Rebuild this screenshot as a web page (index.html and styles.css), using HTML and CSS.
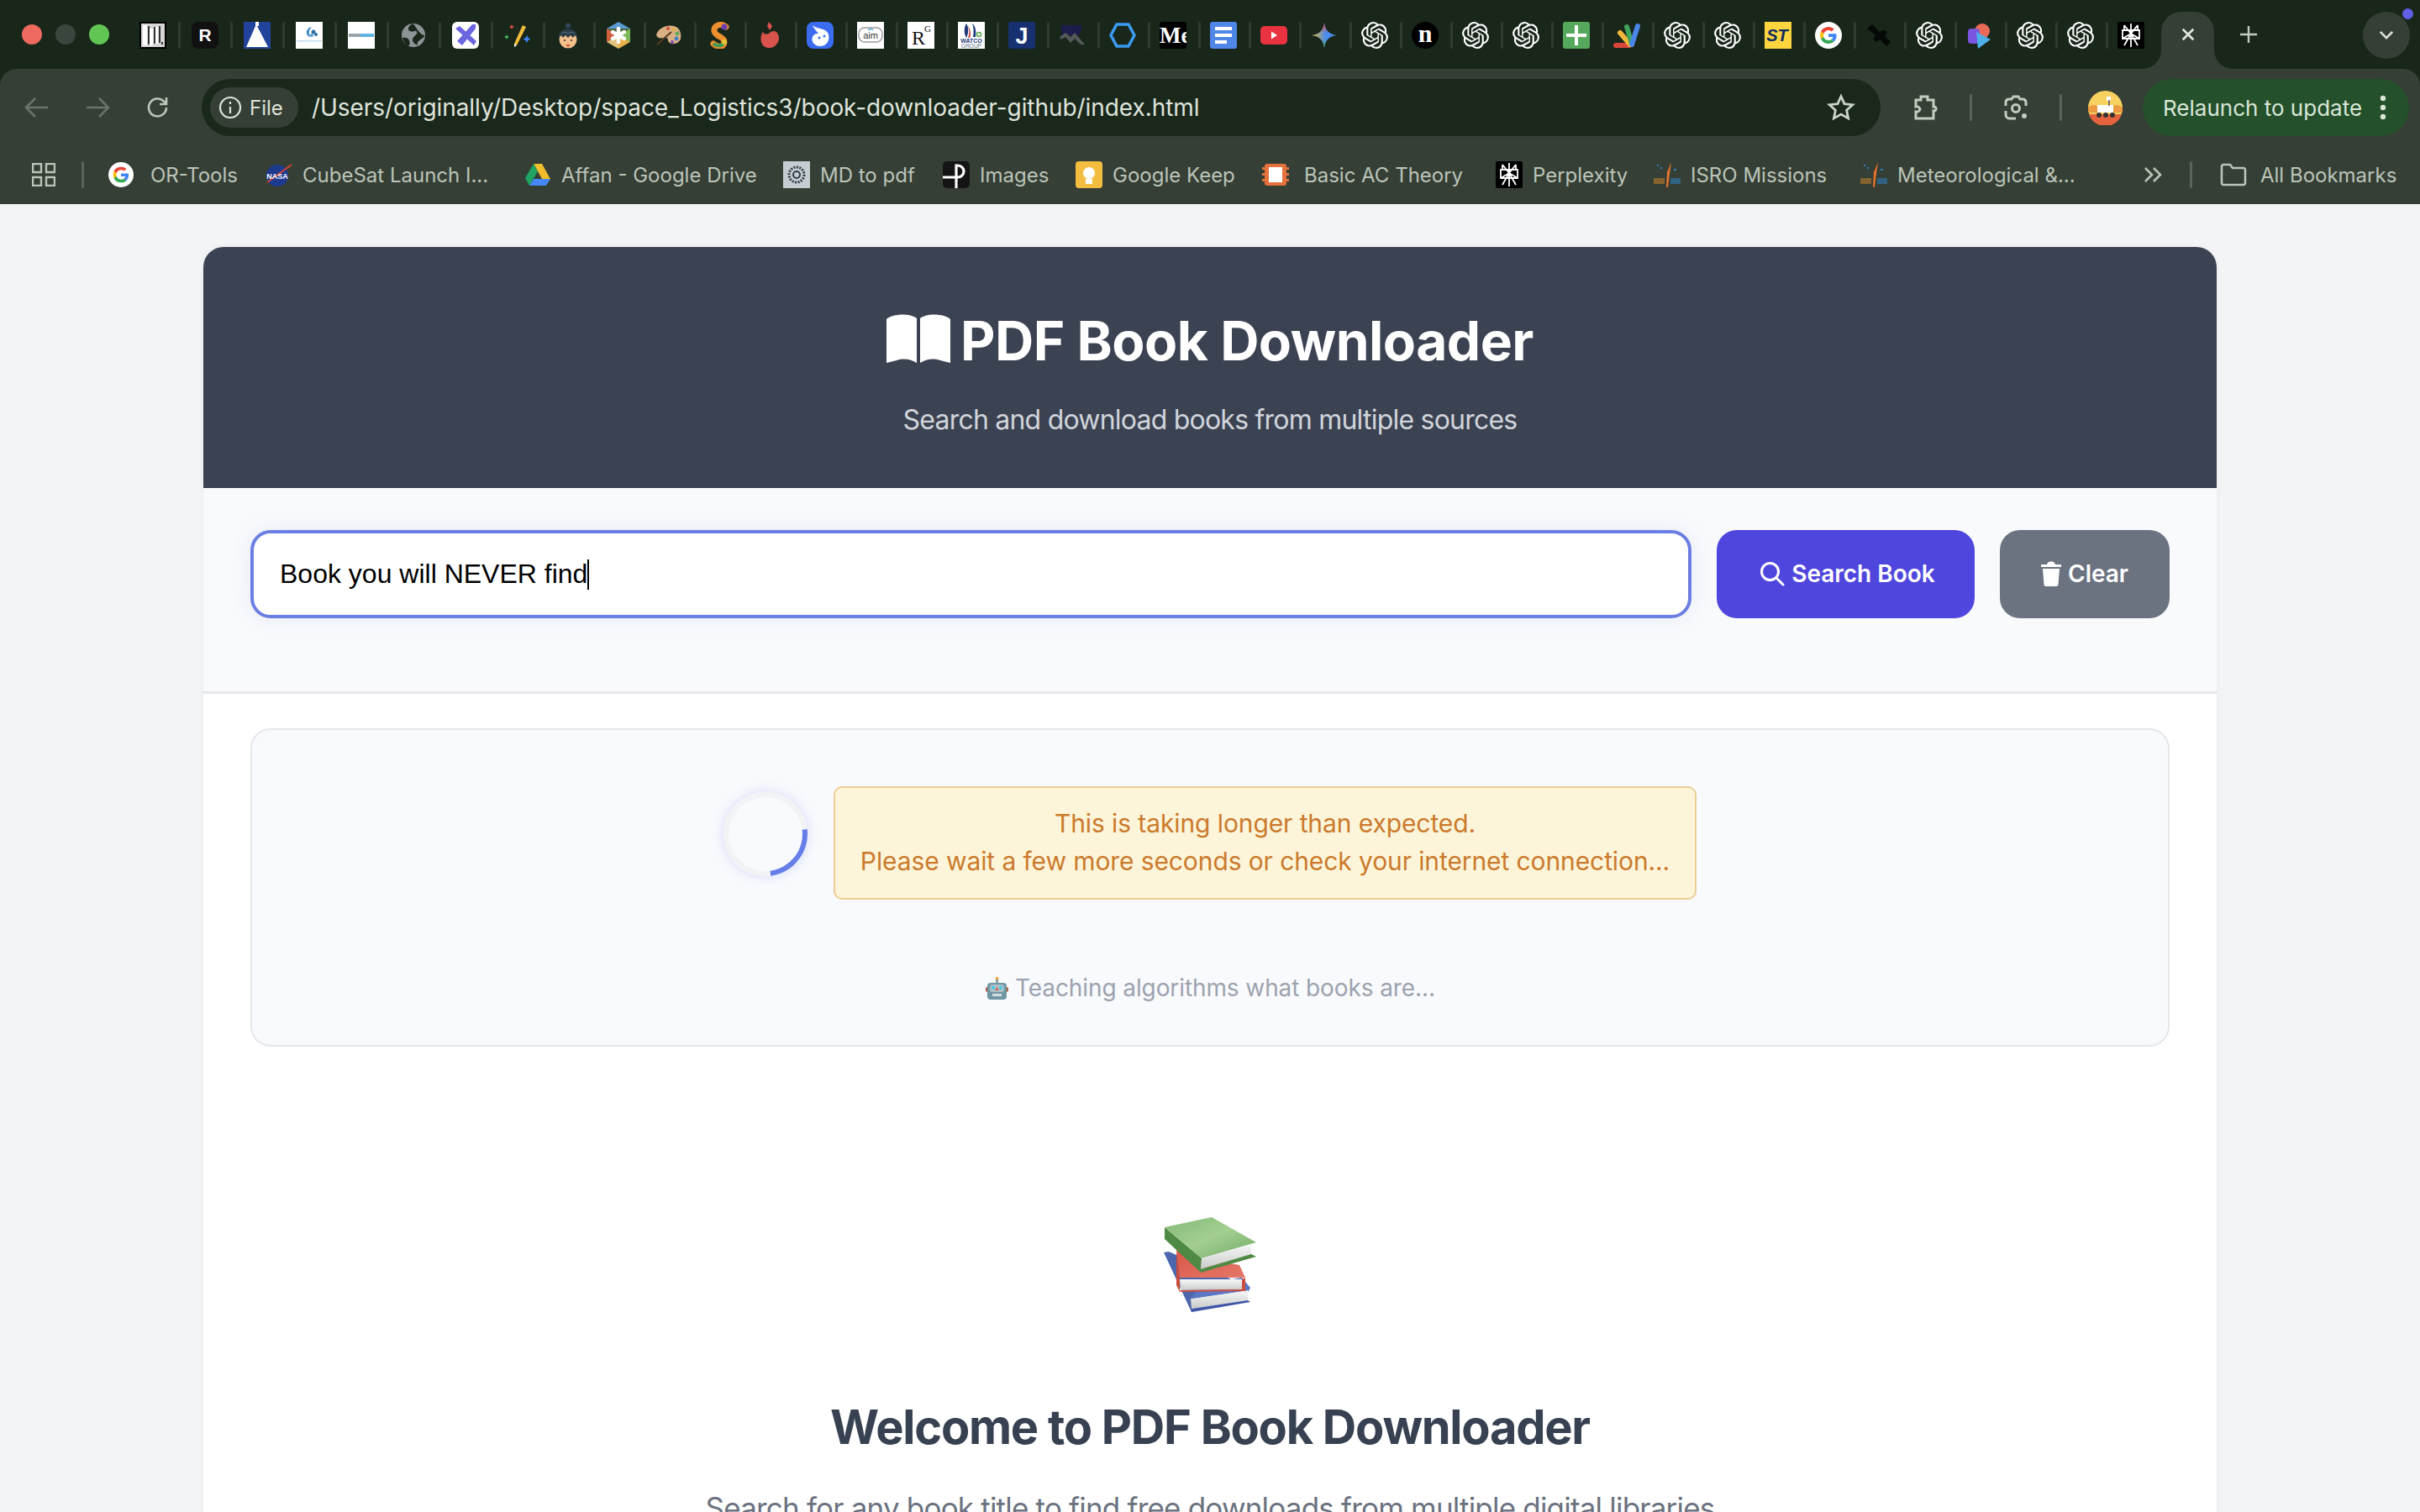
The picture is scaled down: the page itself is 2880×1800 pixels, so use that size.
FILE: index.html
```html
<!DOCTYPE html>
<html lang="en">
<head>
<meta charset="utf-8">
<title>PDF Book Downloader</title>
<link rel="stylesheet" href="styles.css">
</head>
<body>
<svg class="sprite" aria-hidden="true">
  <defs>
    <linearGradient id="gem" x1="0" y1="0" x2="1" y2="0"><stop offset="0" stop-color="#f5b82a"/><stop offset=".55" stop-color="#f5b82a" stop-opacity="0"/></linearGradient>
    <linearGradient id="gem2" x1="0" y1="0" x2="0" y2="1"><stop offset="0" stop-color="#e0483c"/><stop offset=".42" stop-color="#e0483c" stop-opacity="0"/><stop offset=".62" stop-color="#3fae5f" stop-opacity="0"/><stop offset="1" stop-color="#3fae5f"/></linearGradient>
    <linearGradient id="gcover" x1="0" y1="0" x2="1" y2="1"><stop offset="0" stop-color="#84b978"/><stop offset=".5" stop-color="#a3cf90"/><stop offset="1" stop-color="#6fa865"/></linearGradient>
    <linearGradient id="rcover" x1="0" y1="0" x2="1" y2="1"><stop offset="0" stop-color="#d95747"/><stop offset="1" stop-color="#e5786a"/></linearGradient>
    <linearGradient id="pages" x1="0" y1="0" x2="0" y2="1"><stop offset="0" stop-color="#f7f7f7"/><stop offset="1" stop-color="#c9cbcb"/></linearGradient>
    <symbol id="gpt" viewBox="0 0 24 24"><path fill="#fff" d="M22.2819 9.8211a5.9847 5.9847 0 0 0-.5157-4.9108 6.0462 6.0462 0 0 0-6.5098-2.9A6.0651 6.0651 0 0 0 4.9807 4.1818a5.9847 5.9847 0 0 0-3.9977 2.9 6.0462 6.0462 0 0 0 .7427 7.0966 5.98 5.98 0 0 0 .511 4.9107 6.051 6.051 0 0 0 6.5146 2.9001A5.9847 5.9847 0 0 0 13.2599 24a6.0557 6.0557 0 0 0 5.7718-4.2058 5.9894 5.9894 0 0 0 3.9977-2.9001 6.0557 6.0557 0 0 0-.7475-7.0729zm-9.022 12.6081a4.4755 4.4755 0 0 1-2.8764-1.0408l.1419-.0804 4.7783-2.7582a.7948.7948 0 0 0 .3927-.6813v-6.7369l2.02 1.1686a.071.071 0 0 1 .038.052v5.5826a4.504 4.504 0 0 1-4.4945 4.4944zm-9.6607-4.1254a4.4708 4.4708 0 0 1-.5346-3.0137l.142.0852 4.783 2.7582a.7712.7712 0 0 0 .7806 0l5.8428-3.3685v2.3324a.0804.0804 0 0 1-.0332.0615L9.74 19.9502a4.4992 4.4992 0 0 1-6.1408-1.6464zM2.3408 7.8956a4.485 4.485 0 0 1 2.3655-1.9728V11.6a.7664.7664 0 0 0 .3879.6765l5.8144 3.3543-2.0201 1.1685a.0757.0757 0 0 1-.071 0l-4.8303-2.7865A4.504 4.504 0 0 1 2.3408 7.872zm16.5963 3.8558L13.1038 8.364 15.1192 7.2a.0757.0757 0 0 1 .071 0l4.8303 2.7913a4.4944 4.4944 0 0 1-.6765 8.1042v-5.6772a.79.79 0 0 0-.407-.667zm2.0107-3.0231l-.142-.0852-4.7735-2.7818a.7759.7759 0 0 0-.7854 0L9.409 9.2297V6.8974a.0662.0662 0 0 1 .0284-.0615l4.8303-2.7866a4.4992 4.4992 0 0 1 6.6802 4.66zM8.3065 12.863l-2.02-1.1638a.0804.0804 0 0 1-.038-.0567V6.0742a4.4992 4.4992 0 0 1 7.3757-3.4537l-.142.0805L8.704 5.459a.7948.7948 0 0 0-.3927.6813zm1.0976-2.3654l2.602-1.4998 2.6069 1.4998v2.9994l-2.5974 1.4997-2.6067-1.4997Z"/></symbol>
    <symbol id="goog" viewBox="0 0 48 48"><path fill="#EA4335" d="M24 9.5c3.54 0 6.71 1.22 9.21 3.6l6.85-6.85C35.9 2.38 30.47 0 24 0 14.62 0 6.51 5.38 2.56 13.22l7.98 6.19C12.43 13.72 17.74 9.5 24 9.5z"/><path fill="#4285F4" d="M46.98 24.55c0-1.57-.15-3.09-.38-4.55H24v9.02h12.94c-.58 2.96-2.26 5.48-4.78 7.18l7.73 6c4.51-4.18 7.09-10.36 7.09-17.65z"/><path fill="#FBBC05" d="M10.53 28.59c-.48-1.45-.76-2.99-.76-4.59s.27-3.14.76-4.59l-7.98-6.19C.92 16.46 0 20.12 0 24c0 3.88.92 7.54 2.56 10.78l7.97-6.19z"/><path fill="#34A853" d="M24 48c6.48 0 11.93-2.13 15.89-5.81l-7.73-6c-2.15 1.45-4.92 2.3-8.16 2.3-6.26 0-11.57-4.22-13.47-9.91l-7.98 6.19C6.51 42.62 14.62 48 24 48z"/></symbol>
    <symbol id="perp" viewBox="0 0 32 32"><rect width="32" height="32" rx="2" fill="#000"/><path fill="none" stroke="#fff" stroke-width="1.800" d="M16 2v28M8 4l8 10 8-10M6 10h20v10H6zM8 28l8-14 8 14M6 20l10-6 10 6M8 4v6M24 4v6"/></symbol>
    <symbol id="isro" viewBox="0 0 32 32"><path fill="#e9722b" d="M15 31l1-18 5-12-2 13-2 17z"/><path fill="#2f7fc2" d="M4 4h2v2H4zM8 7h2v2H8zM24 9h3v2h-3z"/><path fill="#c9822d" d="M0 20h13v7H0z" opacity=".55"/><path fill="#2f7fc2" d="M20 20h12v7H20z" opacity=".55"/></symbol>
  </defs>
</svg>

<header class="chrome">
  <div class="strip">
    <div class="lights"><span class="light red"></span><span class="light off"></span><span class="light green"></span></div>
    <div class="tabs">
      <div class="tab wide"><svg class="fav" viewBox="0 0 32 32"><rect width="32" height="32" fill="#000"/><rect x="2" y="2" width="28" height="28" fill="#d6d6d6"/><path fill="#fff" d="M4 4h5v24H4zM12 8h4v20h-4zM19 6h3v20h-3z"/><path fill="#333" d="M10 5h2v22h-2zM17 6h2v20h-2zM23 5h2v20h-2zM26 24h2v3h-2z"/></svg><i class="sep"></i></div>
      <div class="tab wide"><svg class="fav" viewBox="0 0 32 32"><rect width="32" height="32" rx="8" fill="#111"/><text x="16" y="23" class="svg-bold" font-size="21" fill="#fff" text-anchor="middle">R</text></svg><i class="sep"></i></div>
      <div class="tab wide"><svg class="fav" viewBox="0 0 32 32"><rect width="32" height="32" fill="#22439c"/><path fill="#fff" d="M14 0h4v5l-2 0 13 25H3L14 5z"/></svg><i class="sep"></i></div>
      <div class="tab wide"><svg class="fav" viewBox="0 0 32 32"><rect width="32" height="32" fill="#fff"/><path fill="#3d8ac9" d="M14 9c2-3 4-3 5-2-4 2-4 8-1 11-4 0-7-5-4-9z"/><circle cx="21" cy="12" r="2.500" fill="#2d6fa8"/><circle cx="24" cy="15" r="2" fill="#2d6fa8"/><circle cx="19" cy="16" r="2" fill="#5ba4d8"/><rect x="1" y="22" width="30" height="1.500" fill="#c3dbec"/></svg><i class="sep"></i></div>
      <div class="tab wide"><svg class="fav" viewBox="0 0 32 32"><rect width="32" height="32" fill="#fff"/><rect x="1" y="14" width="14" height="4" fill="#9aa4ac"/><rect x="15" y="14" width="16" height="4" fill="#5db2e2"/></svg><i class="sep"></i></div>
      <div class="tab wide"><svg class="fav" viewBox="0 0 32 32"><circle cx="16" cy="16" r="14" fill="#8e9396"/><path fill="#19261a" d="M15 2c-5 3-7 7-3 9s6-2 8 1-5 5-5 9 4 6 6 7c-2-7 9-8 8-12-3 0-5-3-7-5s-3-6-7-9zM3 19c3-1 7 0 8 3s1 5-1 7c-4-2-6-6-7-10z"/></svg><i class="sep"></i></div>
      <div class="tab wide"><svg class="fav" viewBox="0 0 32 32"><rect width="32" height="32" rx="6" fill="#fff"/><path fill="#6b66e0" d="M24 3l4 0 0 5-16 20-6-5zM4 8l5-3 20 18-3 5-11-10z"/></svg><i class="sep"></i></div>
      <div class="tab"><svg class="fav" viewBox="0 0 32 32"><path fill="#f3bf3a" d="M22 4l4 2-11 22-3-2z"/><path fill="#fff" d="M12 26l3 2-3 2z"/><path fill="#e04a45" d="M9 3l1 2 2 1-2 1-1 2-1-2-2-1 2-1z"/><path fill="#3fbb5a" d="M3 15l1 2 2 1-2 1-1 2-1-2-2-1 2-1z"/><path fill="#3f82f0" d="M27 16l1.500 3 3 1.500-3 1.500-1.500 3-1.500-3-3-1.500 3-1.500z"/></svg><i class="sep"></i></div>
      <div class="tab"><svg class="fav" viewBox="0 0 32 32"><circle cx="16" cy="21" r="10.500" fill="#f3c08c"/><path fill="#2b3c48" d="M5 19c-1-7 5-11 11-11s12 4 11 11l-3-3-2 3-3-3-3 3-3-3-3 3-2-3z"/><circle cx="16" cy="4.500" r="3" fill="#33485a"/><path fill="none" stroke="#5a6f80" stroke-width="1" d="M8 14l4-2 4 2 4-2 4 2"/><circle cx="12" cy="22" r="1" fill="#333"/><circle cx="20" cy="22" r="1" fill="#333"/><path fill="#c94a3a" d="M13 27h6l-3 3z"/></svg><i class="sep"></i></div>
      <div class="tab"><svg class="fav" viewBox="0 0 32 32"><path fill="#5b9bd5" d="M16 0l14 8H2z"/><path fill="#7dbb5a" d="M30 8v16l-14-8z"/><path fill="#e9b04d" d="M30 24l-14 8V16z"/><path fill="#ddc27a" d="M16 32L2 24l14-8z"/><path fill="#d2603f" d="M2 24V8l14 8z"/><path fill="#9ac267" d="M2 8h28L16 16z" opacity=".4"/><path stroke="#fff" stroke-width="4.500" stroke-linecap="round" d="M16 8v16M9 12l14 8M23 12L9 20"/></svg><i class="sep"></i></div>
      <div class="tab"><svg class="fav" viewBox="0 0 32 32"><path fill="#d9b184" d="M1 16C3 7 14 3 22 5s9 10 8 15-9 8-13 5 0-6-5-6-8 2-11-3z"/><circle cx="15" cy="8" r="2" fill="#d94a3a"/><circle cx="22" cy="9" r="2" fill="#e3b33c"/><circle cx="26" cy="14" r="2.400" fill="#62a85b"/><circle cx="25" cy="20" r="2.400" fill="#3f82c9"/><circle cx="20" cy="24" r="2" fill="#7d4fb5"/><path stroke="#5a3a20" stroke-width="2" d="M2 27L19 12"/></svg><i class="sep"></i></div>
      <div class="tab"><svg class="fav" viewBox="0 0 32 32"><path fill="none" stroke="#ec8f2c" stroke-width="7" stroke-linecap="round" d="M24 6c-6-5-15-2-14 5s12 6 12 13-9 6-13 2"/><path fill="none" stroke="#3a9a5b" stroke-width="4" d="M9 26c4 3 10 3 12 0"/><circle cx="22" cy="6" r="3.500" fill="#6a3fb0"/><circle cx="22" cy="24" r="3" fill="#e6c93a"/></svg><i class="sep"></i></div>
      <div class="tab"><svg class="fav" viewBox="0 0 32 32"><path fill="#d9534d" d="M15 0l4 5-3 5-3-5zM8 12c2 4 6 3 8 1s6-3 8-1c4 5 4 10 0 15s-11 5-15 2-5-12-1-17z"/></svg><i class="sep"></i></div>
      <div class="tab"><svg class="fav" viewBox="0 0 32 32"><rect width="32" height="32" rx="8" fill="#3b6cf0"/><path fill="#fff" d="M7 4c5 5 17 3 19 11s-3 14-10 14-11-6-9-11 7-4 7-4c-3-4-6-7-7-10z"/><circle cx="15" cy="19" r="1.500" fill="#3b6cf0"/><circle cx="21" cy="17" r="1.500" fill="#3b6cf0"/></svg><i class="sep"></i></div>
      <div class="tab"><svg class="fav" viewBox="0 0 32 32"><rect width="32" height="32" fill="#fff"/><rect x="2" y="7" width="28" height="17" rx="7" fill="#fff" stroke="#999" stroke-width="1.400"/><text x="16" y="20" class="svg-sans" font-size="11" fill="#333" text-anchor="middle">aim</text><path stroke="#4ab0d9" stroke-width="1.500" fill="none" d="M13 10c2-2 5-2 6 0"/></svg><i class="sep"></i></div>
      <div class="tab"><svg class="fav" viewBox="0 0 32 32"><rect width="32" height="32" fill="#fff"/><text x="5" y="27" class="svg-serif" font-size="24" fill="#111">R</text><text x="20" y="12" class="svg-serif" font-size="11" fill="#111">G</text></svg><i class="sep"></i></div>
      <div class="tab"><svg class="fav" viewBox="0 0 32 32"><rect width="32" height="32" fill="#fff"/><path fill="#1e3a7a" d="M10 2c3 4 3 11 0 17-3-5-3-12 0-17zM17 2c4 3 5 9 4 16h-3c1-6 1-11-1-16z"/><path fill="#c93a34" d="M12 5c3 4 4 9 2 14h-2c2-5 2-9 0-14z"/><circle cx="25" cy="15" r="2.500" fill="none" stroke="#5aa845" stroke-width="1.500"/><text x="16" y="25" class="svg-bold" font-size="7" fill="#1e3a7a" text-anchor="middle">WATCO</text><text x="16" y="31" class="svg-sans" font-size="6.500" fill="#5f6c86" text-anchor="middle">GROUP</text></svg><i class="sep"></i></div>
      <div class="tab"><svg class="fav" viewBox="0 0 32 32"><rect width="32" height="32" rx="3" fill="#17306f"/><text x="16" y="26" class="svg-bold" font-size="27" fill="#fff" text-anchor="middle">J</text></svg><i class="sep"></i></div>
      <div class="tab"><svg class="fav" viewBox="0 0 32 32"><path fill="#1d1c4a" d="M2 4h26l-4 12H4z"/><path fill="#55595a" d="M1 18l7-5 6 5 5-5 12 14h-5l-7-7-5 5-6-7-5 3z"/></svg><i class="sep"></i></div>
      <div class="tab"><svg class="fav" viewBox="0 0 32 32"><path fill="none" stroke="#3a9bef" stroke-width="3.600" d="M9 3h14l7 13-7 13H9L2 16z"/></svg><i class="sep"></i></div>
      <div class="tab"><svg class="fav" viewBox="0 0 32 32"><rect width="32" height="32" rx="3" fill="#000"/><text x="0" y="25" class="svg-serif-b" font-size="27" fill="#fff">Me</text></svg><i class="sep"></i></div>
      <div class="tab"><svg class="fav" viewBox="0 0 32 32"><rect width="32" height="32" rx="3" fill="#4f87e8"/><path fill="#fff" d="M6 6h20v4H6zM6 14h20v4H6zM6 22h14v4H6z"/></svg><i class="sep"></i></div>
      <div class="tab"><svg class="fav" viewBox="0 0 32 32"><rect y="5" width="32" height="22" rx="5" fill="#ea3340"/><path fill="#fff" d="M13 11.500l7 4.500-7 4.500z"/></svg><i class="sep"></i></div>
      <div class="tab"><svg class="fav" viewBox="0 0 32 32"><path fill="#4a8cf0" d="M16 1c1 9 6 14 15 15-9 1-14 6-15 15-1-9-6-14-15-15 9-1 14-6 15-15z"/><path fill="url(#gem)" d="M16 1c1 9 6 14 15 15-9 1-14 6-15 15-1-9-6-14-15-15 9-1 14-6 15-15z"/><path fill="url(#gem2)" d="M16 1c1 9 6 14 15 15-9 1-14 6-15 15-1-9-6-14-15-15 9-1 14-6 15-15z"/></svg><i class="sep"></i></div>
      <div class="tab"><svg class="fav"><use href="#gpt"/></svg><i class="sep"></i></div>
      <div class="tab"><svg class="fav" viewBox="0 0 32 32"><circle cx="16" cy="16" r="16" fill="#000"/><text x="16" y="24" class="svg-serif-b" font-size="30" fill="#fff" text-anchor="middle">n</text></svg><i class="sep"></i></div>
      <div class="tab"><svg class="fav"><use href="#gpt"/></svg><i class="sep"></i></div>
      <div class="tab"><svg class="fav"><use href="#gpt"/></svg><i class="sep"></i></div>
      <div class="tab"><svg class="fav" viewBox="0 0 32 32"><rect width="32" height="32" rx="3" fill="#56a85c"/><path fill="#fff" d="M14 4h4v10h10v4H18v10h-4V18H4v-4h10z"/></svg><i class="sep"></i></div>
      <div class="tab"><svg class="fav" viewBox="0 0 32 32"><path stroke="#d9453a" stroke-width="6" stroke-linecap="round" d="M3 28h16"/><path stroke="#f0b73c" stroke-width="6" stroke-linecap="round" d="M8 13l12 14"/><path stroke="#3fa35a" stroke-width="6" stroke-linecap="round" d="M16 6l6 20"/><path stroke="#4a86e8" stroke-width="6" stroke-linecap="round" d="M29 5l-7 22"/></svg><i class="sep"></i></div>
      <div class="tab"><svg class="fav"><use href="#gpt"/></svg><i class="sep"></i></div>
      <div class="tab"><svg class="fav"><use href="#gpt"/></svg><i class="sep"></i></div>
      <div class="tab"><svg class="fav" viewBox="0 0 32 32"><rect width="32" height="32" fill="#fdd53f"/><text x="15" y="23" class="svg-bold-i" font-size="20" fill="#0b2a5e" text-anchor="middle">ST</text></svg><i class="sep"></i></div>
      <div class="tab"><svg class="fav" viewBox="0 0 32 32"><circle cx="16" cy="16" r="16" fill="#fff"/><use href="#goog" x="6" y="6" width="20" height="20"/></svg><i class="sep"></i></div>
      <div class="tab"><svg class="fav" viewBox="0 0 32 32"><path fill="#060a06" d="M2 8l6-5 9 9 5-3 4 4-3 4 7 7-5 5-8-8-4 3-4-4 3-4z"/></svg><i class="sep"></i></div>
      <div class="tab"><svg class="fav"><use href="#gpt"/></svg><i class="sep"></i></div>
      <div class="tab"><svg class="fav" viewBox="0 0 32 32"><circle cx="19" cy="11" r="9" fill="#ea6a58"/><rect x="2" y="8" width="14" height="18" rx="4" fill="#7a55e0"/><path fill="#4db0e8" d="M12 12l17 9-15 11z"/></svg><i class="sep"></i></div>
      <div class="tab"><svg class="fav"><use href="#gpt"/></svg><i class="sep"></i></div>
      <div class="tab"><svg class="fav"><use href="#gpt"/></svg><i class="sep"></i></div>
      <div class="tab last"><svg class="fav"><use href="#perp"/></svg></div>
    </div>
    <div class="active-tab"><svg class="ico-x" viewBox="0 0 20 20"><path d="M3 3l14 14M17 3L3 17"/></svg></div>
    <svg class="ico-plus" viewBox="0 0 24 24"><path d="M12 1v22M1 12h22"/></svg>
    <div class="tab-search"><svg class="ico-chev" viewBox="0 0 20 12"><path d="M2 2l8 8 8-8"/></svg><span class="tab-dot"></span></div>
  </div>

  <div class="toolbar">
    <nav class="nav">
      <svg class="nav-ico dim" viewBox="0 0 32 32"><path d="M29 16H4M14 5L3 16l11 11"/></svg>
      <svg class="nav-ico dim" viewBox="0 0 32 32"><path d="M3 16h25M18 5l11 11-11 11"/></svg>
      <svg class="nav-ico" viewBox="0 0 32 32"><path d="M26 16a10.500 10.500 0 1 1-3-7.400L26 12M26 4v8h-8"/></svg>
    </nav>
    <div class="omni">
      <div class="chip"><svg class="info" viewBox="0 0 28 28"><circle cx="14" cy="14" r="12"/><path d="M14 13v8M14 7v3"/></svg><span>File</span></div>
      <span class="url">/Users/originally/Desktop/space_Logistics3/book-downloader-github/index.html</span>
      <svg class="star" viewBox="0 0 32 32"><path d="M16 3.500l3.800 8.400 9.200 1-6.800 6.200 1.900 9-8.100-4.600-8.100 4.600 1.900-9L3 12.900l9.200-1z"/></svg>
    </div>
    <div class="tb-right">
      <svg class="ext" viewBox="0 0 34 32"><path d="M4 7h6V3h8v4h7v8c4-1 4 6 0 5v9H4v-8c4 1 5-3 5-3s-1-4-5-3z"/></svg>
      <i class="tb-sep"></i>
      <svg class="lens" viewBox="0 0 36 36"><path d="M6 16v-4c0-3 2-4 4-4h3l2-3h6l2 3h3c2 0 4 1 4 4v4M6 22v4c0 3 2 5 4 5h8"/><circle cx="18" cy="19" r="4.500"/><circle class="lens-dot" cx="28" cy="28" r="3"/></svg>
      <i class="tb-sep"></i>
      <svg class="avatar" viewBox="0 0 41 41"><circle cx="20.500" cy="20.500" r="20.500" fill="#f7d260"/><path fill="#eb9b40" d="M0 20c6-5 10-3 14 1l13-1c4-4 9-4 14 0v6H0z"/><path fill="#e4633c" d="M1 28h39a20.500 20.500 0 0 1-39 0z"/><rect x="11" y="17" width="19" height="9" rx="1" fill="#fff"/><rect x="22" y="7" width="5" height="5" fill="#fff"/><rect x="24" y="11" width="2" height="7" fill="#777"/><circle cx="13" cy="29" r="3" fill="#333"/><circle cx="21" cy="29" r="3" fill="#333"/><circle cx="29" cy="29" r="3" fill="#333"/></svg>
      <div class="relaunch"><span>Relaunch to update</span><svg class="kebab" viewBox="0 0 8 30"><circle cx="4" cy="4" r="3.200"/><circle cx="4" cy="15" r="3.200"/><circle cx="4" cy="26" r="3.200"/></svg></div>
    </div>
  </div>

  <div class="bookmarks">
    <svg class="apps" viewBox="0 0 28 28"><path d="M1 1h10v10H1zM17 1h10v10H17zM1 17h10v10H1zM17 17h10v10H17z"/></svg>
    <i class="bm-sep first"></i>
    <div class="bm b1"><svg class="bm-ico" viewBox="0 0 32 32"><circle cx="16" cy="16" r="15" fill="#fff"/><use href="#goog" x="6.500" y="6.500" width="19" height="19"/></svg><span>OR-Tools</span></div>
    <div class="bm b2"><svg class="bm-ico" viewBox="0 0 32 32"><circle cx="14" cy="17" r="13" fill="#1d3a8f"/><path stroke="#e0402e" stroke-width="1.600" d="M2 25L31 4"/><text x="14" y="21" class="svg-bold" font-size="9" fill="#fff" text-anchor="middle">NASA</text></svg><span>CubeSat Launch I...</span></div>
    <div class="bm b3"><svg class="bm-ico" viewBox="0 0 32 32"><path fill="#f2bd2c" d="M11 3h10l10 18H21z"/><path fill="#1fa463" d="M11 3l5 9-10 17-5-9z"/><path fill="#4587f4" d="M11 21h20l-5 8H6z"/></svg><span>Affan - Google Drive</span></div>
    <div class="bm b4"><svg class="bm-ico" viewBox="0 0 32 32"><rect width="32" height="32" fill="#c6cdd2"/><circle cx="16" cy="16" r="9" fill="none" stroke="#2c3a44" stroke-width="3" stroke-dasharray="2 1.500"/><circle cx="16" cy="16" r="4" fill="none" stroke="#2c3a44" stroke-width="2"/></svg><span>MD to pdf</span></div>
    <div class="bm b5"><svg class="bm-ico" viewBox="0 0 32 32"><rect width="32" height="32" rx="5" fill="#141414"/><path fill="none" stroke="#fff" stroke-width="3.200" d="M16 32V5h2a7 7 0 0 1 0 14H0"/></svg><span>Images</span></div>
    <div class="bm b6"><svg class="bm-ico" viewBox="0 0 32 32"><rect width="32" height="32" rx="4" fill="#f3bd3f"/><circle cx="16" cy="14" r="7" fill="#fff"/><rect x="12" y="21" width="8" height="6" fill="#fff"/></svg><span>Google Keep</span></div>
    <div class="bm b7"><svg class="bm-ico" viewBox="0 0 32 32"><rect x="3" y="3" width="26" height="26" rx="3" fill="#e5713c"/><path fill="#e5713c" d="M0 7h32v3H0zM0 14h32v3H0zM0 21h32v3H0z"/><rect x="8" y="7" width="16" height="18" fill="#fff"/></svg><span>Basic AC Theory</span></div>
    <div class="bm b8"><svg class="bm-ico"><use href="#perp"/></svg><span>Perplexity</span></div>
    <div class="bm b9"><svg class="bm-ico"><use href="#isro"/></svg><span>ISRO Missions</span></div>
    <div class="bm b10"><svg class="bm-ico"><use href="#isro"/></svg><span>Meteorological &amp;...</span></div>
    <svg class="more" viewBox="0 0 22 20"><path d="M2 2l8 8-8 8M12 2l8 8-8 8"/></svg>
    <i class="bm-sep second"></i>
    <svg class="folder" viewBox="0 0 32 28"><path d="M2 24V4c0-1 1-2 2-2h8l3 4h13c1 0 2 1 2 2v16c0 1-1 2-2 2H4c-1 0-2-1-2-2z"/></svg>
    <span class="all">All Bookmarks</span>
  </div>
</header>

<main class="page">
  <div class="container">
    <section class="hero">
      <h1 class="hero-title">
        <svg class="book-ico" viewBox="0 0 76 58"><path d="M0 6C6 0 27-2 36 5v53c-6-4-15-6-24-3-4 1-8 2-12 3zM40 5c9-7 30-5 36 1v52c-4-1-8-2-12-3-9-3-18-1-24 3z"/></svg>
        <span>PDF Book Downloader</span>
      </h1>
      <p class="hero-sub">Search and download books from multiple sources</p>
    </section>

    <section class="search">
      <div class="field"><span>Book you will NEVER find</span><i class="caret"></i></div>
      <button class="btn primary"><svg class="btn-ico" viewBox="0 0 30 30"><circle cx="12.500" cy="12.500" r="10"/><path d="M20 20l8 8"/></svg><span>Search Book</span></button>
      <button class="btn muted"><svg class="trash" viewBox="0 0 24 30"><path d="M0 4h7l1-2c1-2 7-2 8 0l1 2h7v3H0zM2 9h20l-1.500 19c0 1-1 2-2 2h-13c-1 0-2-1-2-2z"/></svg><span>Clear</span></button>
    </section>

    <section class="loading">
      <div class="loading-row">
        <div class="spinner"></div>
        <div class="notice">
          <p>This is taking longer than expected.</p>
          <p>Please wait a few more seconds or check your internet connection...</p>
        </div>
      </div>
      <p class="status"><svg class="robot" viewBox="0 0 29 28"><circle cx="14.500" cy="3" r="2" fill="#f0a63c"/><rect x="13" y="4" width="3" height="4" fill="#8fa3aa"/><rect x="1" y="13" width="27" height="6" rx="2" fill="#b5603f"/><rect x="3" y="8" width="23" height="20" rx="4" fill="#6f97a4"/><rect x="6" y="10" width="17" height="9" rx="3" fill="#aebfc6"/><circle cx="10" cy="14" r="2" fill="#3fd0e8"/><circle cx="19" cy="14" r="2" fill="#3fd0e8"/><path fill="#d9584a" d="M14.500 13l2 4h-4z"/><rect x="9" y="21" width="11" height="3" fill="#d7dde0"/></svg><span>Teaching algorithms what books are...</span></p>
    </section>

    <section class="welcome">
      <svg class="books" viewBox="0 0 110 114">
        <path fill="#4d67ad" d="M0 42l6-1 97 43-3 5-67 9v15z"/>
        <path fill="url(#pages)" d="M32 97l68-10v12l-67 10z"/>
        <path fill="#3f56a6" d="M33 113l70-12-3-2-67 10z"/>
        <path fill="#5b76c4" d="M45 80l48-8 10 12-3 3-68 10z"/>
        <path fill="#c94c3c" d="M15 39l4 33v17l-4-8z"/>
        <path fill="url(#rcover)" d="M15 39l30 10 45 8 7 15H19z"/>
        <path fill="url(#pages)" d="M19 74l74 0v12l-73 1z"/>
        <path fill="#cc4f40" d="M19 89l78-1 0-16-4 2v12l-73 1z"/>
        <path fill="#4f8a45" d="M1 12l44 37-1 17L1 26z"/>
        <path fill="url(#gcover)" d="M1 12L57 0l53 30-65 19z"/>
        <path fill="url(#pages)" d="M45 49l59-17v12l-60 18z"/>
        <path fill="#4f8a45" d="M44 66l66-19-6-3-60 18z"/>
      </svg>
      <h2 class="welcome-title">Welcome to PDF Book Downloader</h2>
      <p class="welcome-sub">Search for any book title to find free downloads from multiple digital libraries</p>
    </section>
  </div>
</main>
</body>
</html>
```

FILE: styles.css
```css
* { box-sizing: border-box; }
html, body { margin: 0; height: 100%; overflow: hidden; }
body { background: #f3f4f6; font-family: Inter, "Liberation Sans", sans-serif; }
p, h1, h2 { margin: 0; }
i { display: block; }
.sprite { position: absolute; width: 0; height: 0; }
.svg-bold { font-family: "Liberation Sans", sans-serif; font-weight: 700; }
.svg-bold-i { font-family: "Liberation Sans", sans-serif; font-weight: 700; font-style: italic; }
.svg-sans { font-family: "Liberation Sans", sans-serif; }
.svg-serif { font-family: "Liberation Serif", serif; }
.svg-serif-b { font-family: "Liberation Serif", serif; font-weight: 700; }

/* browser chrome */
.chrome { background: #19261a; }
.strip { height: 82px; display: flex; align-items: flex-start; padding-left: 26px; }
.lights { display: flex; gap: 16px; margin: 29px 36px 0 0; }
.light { width: 24px; height: 24px; border-radius: 50%; }
.red { background: #ee6a5f; }
.off { background: #3a463d; }
.green { background: #61c554; }
.tabs { display: flex; padding-top: 26px; }
.tab { width: 60px; height: 32px; display: flex; gap: 14px; flex: none; }
.tab.wide { width: 62px; }
.tab.last { width: 32px; margin-right: 20px; }
.fav { width: 32px; height: 32px; flex: none; display: block; }
.sep { width: 3px; height: 32px; background: #2f3b30; border-radius: 2px; flex: none; }
.active-tab { position: relative; width: 63px; height: 68px; margin-top: 14px; background: #353f35; border-radius: 24px 24px 0 0; display: flex; justify-content: center; padding-top: 18px; flex: none; }
.active-tab::before, .active-tab::after { content: ""; position: absolute; bottom: 0; width: 22px; height: 22px; }
.active-tab::before { left: -22px; background: radial-gradient(circle at 0 0, transparent 21.500px, #353f35 22px); }
.active-tab::after { right: -22px; background: radial-gradient(circle at 100% 0, transparent 21.500px, #353f35 22px); }
.ico-x { width: 18px; height: 18px; fill: none; stroke: #e2e7df; stroke-width: 3; }
.ico-plus { width: 22px; height: 22px; margin: 30px 0 0 30px; fill: none; stroke: #c3cbc0; stroke-width: 2.600; flex: none; }
.tab-search { position: relative; width: 56px; height: 56px; margin: 14px 12px 0 auto; background: #353f35; border-radius: 28px; display: flex; align-items: center; justify-content: center; flex: none; }
.ico-chev { width: 18px; height: 11px; fill: none; stroke: #dfe4dc; stroke-width: 2.800; margin-top: -2px; }
.tab-dot { position: absolute; top: -4px; right: -4px; width: 13px; height: 13px; border-radius: 50%; background: #5f5fe6; }

.toolbar { height: 80px; padding-top: 12px; background: #353f35; border-radius: 20px 20px 0 0; display: flex; align-items: flex-start; }
.nav { width: 240px; height: 68px; padding-left: 28px; display: flex; gap: 40px; align-items: center; flex: none; }
.nav-ico { width: 32px; height: 32px; fill: none; stroke: #bcc5ba; stroke-width: 2.600; flex: none; }
.nav-ico.dim { stroke: #68746a; }
.omni { flex: 1; min-width: 0; height: 68px; background: #1a271b; border-radius: 34px; padding: 0 30px 0 10px; display: flex; align-items: center; }
.chip { width: 105px; height: 48px; border-radius: 24px; background: #353f35; display: flex; align-items: center; gap: 9px; padding-left: 10px; color: #dfe4dc; font-size: 24px; flex: none; }
.info { width: 28px; height: 28px; fill: none; stroke: #dfe4dc; stroke-width: 2.200; flex: none; }
.url { margin-left: 16px; color: #dfe4dc; font-size: 28px; letter-spacing: -.06px; white-space: nowrap; flex: 1; }
.star { width: 34px; height: 34px; fill: none; stroke: #cdd4ca; stroke-width: 2.600; flex: none; }
.tb-right { display: flex; align-items: center; gap: 34px; height: 68px; margin-left: 38px; padding-right: 13px; flex: none; }
.ext { width: 34px; height: 32px; fill: none; stroke: #c2cdc0; stroke-width: 3; flex: none; }
.tb-sep { width: 3px; height: 32px; background: #59655a; border-radius: 2px; flex: none; }
.lens { width: 36px; height: 36px; fill: none; stroke: #c2cdc0; stroke-width: 3; flex: none; }
.lens-dot { fill: #c2cdc0; stroke: none; }
.avatar { width: 41px; height: 41px; margin: 0 2px 0 -3px; flex: none; }
.relaunch { width: 317px; height: 68px; margin-left: -12px; background: #24502b; border-radius: 34px; display: flex; align-items: center; justify-content: space-between; padding: 0 27px 0 24px; color: #d9e6d8; font-size: 26px; white-space: nowrap; flex: none; }
.kebab { width: 8px; height: 30px; fill: #d9e6d8; flex: none; }

.bookmarks { height: 81px; padding: 11px 0 0 38px; background: #353f35; display: flex; align-items: center; color: #bcc4b9; font-size: 24px; white-space: nowrap; }
.apps { width: 28px; height: 28px; fill: none; stroke: #bcc4b9; stroke-width: 2.400; flex: none; }
.bm-sep { width: 3px; height: 32px; background: #59655a; border-radius: 2px; flex: none; }
.bm-sep.first { margin: 0 28px 0 31px; }
.bm-sep.second { margin: 0 33px 0 33px; }
.bm { display: flex; align-items: center; gap: 12px; flex: none; }
.bm-ico { width: 32px; height: 32px; flex: none; }
.b1 { width: 188px; } .b1 .bm-ico { margin-right: 7px; }
.b2 { width: 308px; }
.b3 { width: 308px; }
.b4 { width: 190px; }
.b5 { width: 158px; }
.b6 { width: 222px; }
.b7 { width: 278px; } .b7 .bm-ico { margin-right: 6px; }
.b8 { width: 188px; }
.b9 { width: 246px; }
.b10 { width: 337px; }
.more { width: 22px; height: 20px; fill: none; stroke: #bcc4b9; stroke-width: 2.600; flex: none; }
.folder { width: 32px; height: 28px; fill: none; stroke: #bcc4b9; stroke-width: 2.600; flex: none; }
.all { margin-left: 16px; }

/* page */
.page { padding-top: 51px; }
.container { width: 2396px; margin: 0 auto; background: #fff; border-radius: 24px 24px 0 0; overflow: hidden; box-shadow: 0 0 6px rgba(60, 70, 100, .06); }
.hero { height: 287px; padding-top: 70px; background: #3b4252; text-align: center; }
.hero-title { display: flex; justify-content: center; align-items: center; gap: 12px; color: #fff; font-size: 64px; font-weight: 700; line-height: 84px; letter-spacing: -.5px; }
.book-ico { width: 76px; height: 58px; fill: #fff; flex: none; margin-top: -6px; }
.hero-sub { margin-top: 32px; color: #d1d5db; font-size: 32px; line-height: 40px; letter-spacing: -.78px; }

.search { height: 245px; padding: 50px 56px 0; background: #f9fafc; border-bottom: 3px solid #e7e8ee; display: flex; align-items: flex-start; gap: 30px; }
.field { flex: 1; height: 105px; background: #fff; border: 4px solid #6b7fe3; border-radius: 24px; padding-left: 31px; display: flex; align-items: center; font-family: "Liberation Sans", Arial, sans-serif; font-size: 32px; color: #000; box-shadow: 0 0 24px rgba(102, 126, 234, .12); }
.caret { width: 2px; height: 36px; background: #000; }
.btn { height: 105px; padding-bottom: 2px; border: 0; border-radius: 24px; color: #fff; font: 600 28px Inter, "Liberation Sans", sans-serif; display: flex; align-items: center; justify-content: center; gap: 8px; flex: none; }
.primary { width: 307px; background: #4f46dd; padding-right: 2px; }
.muted { width: 202px; background: #6b7280; }
.btn-ico { width: 30px; height: 30px; fill: none; stroke: #fff; stroke-width: 3; stroke-linecap: round; flex: none; }
.trash { width: 24px; height: 30px; fill: #fff; flex: none; }

.loading { margin: 41px 56px 0; height: 379px; padding-top: 67px; background: #f9fafd; border: 2px solid #e5e7eb; border-radius: 24px; }
.loading-row { display: flex; justify-content: center; align-items: flex-start; gap: 31px; }
.spinner { width: 100px; height: 100px; margin-top: 7px; border: 6px solid #f2f3f5; border-top-color: #667eea; border-radius: 50%; transform: rotate(128deg); box-shadow: 0 0 14px rgba(102, 126, 234, .25); flex: none; }
.notice { width: 1027px; height: 135px; padding-top: 20px; background: #fdf5d9; border: 2px solid #edcc96; border-radius: 10px; color: #cb7a2c; font-size: 30px; letter-spacing: -.1px; line-height: 45px; text-align: center; white-space: nowrap; }
.status { margin-top: 85px; color: #9ca3af; font-size: 28px; letter-spacing: -.1px; line-height: 40px; display: flex; justify-content: center; align-items: center; gap: 7px; }
.robot { width: 29px; height: 28px; flex: none; }

.welcome { padding-top: 203px; text-align: center; }
.books { width: 110px; height: 114px; display: block; margin: 0 auto; }
.welcome-title { margin-top: 100px; color: #374151; font-size: 56px; font-weight: 700; line-height: 72px; letter-spacing: -1.250px; }
.welcome-sub { margin-top: 36px; color: #6b7280; font-size: 35px; line-height: 48px; letter-spacing: -.8px; white-space: nowrap; }
```
